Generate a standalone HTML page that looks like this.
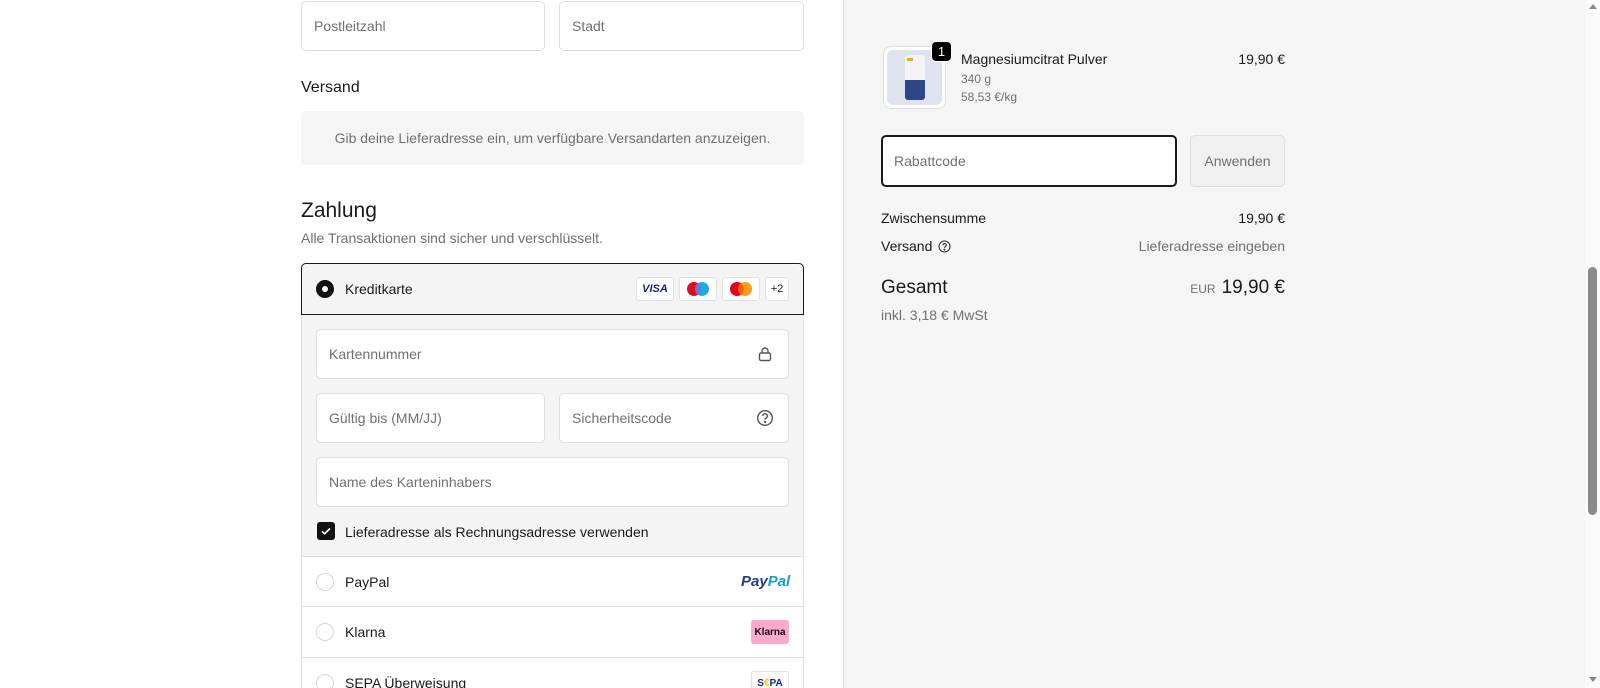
<!DOCTYPE html>
<html style="overflow:hidden;height:688px"><head><meta charset="utf-8"><style>
*{box-sizing:border-box;margin:0;padding:0}
body{width:1600px;height:688px;overflow:hidden;background:#fff;font-family:"Liberation Sans",sans-serif;color:#1a1a1a;position:relative;font-size:14px}
.abs{position:absolute}
.inp{position:absolute;border:1px solid #dedede;border-radius:5px;background:#fff;color:#707070;font-size:14px;padding-left:12px;display:flex;align-items:center}
.right{position:absolute;left:843px;top:0;width:742px;height:688px;background:#f5f5f5;border-left:1px solid #dedede}
.sb{position:absolute;left:1585px;top:0;width:15px;height:688px;background:#fafafa}
.card{position:absolute;height:24px;top:277px;background:#fff;border:1px solid #e1e1e1;border-radius:3px}
.radio{position:absolute;left:316px;width:18px;height:18px;border:1px solid #d6d6d6;border-radius:50%;background:#fff}
.hr{position:absolute;left:302px;width:501px;height:1px;background:#dedede}
.lbl{position:absolute;left:345px;font-size:14px}
</style></head><body>
<div class="inp" style="left:301px;top:1px;width:244px;height:50px">Postleitzahl</div>
<div class="inp" style="left:559px;top:1px;width:245px;height:50px">Stadt</div>
<div class="abs" style="left:301px;top:79px;font-size:16px">Versand</div>
<div class="abs" style="left:301px;top:111px;width:503px;height:54px;background:#f5f5f5;border-radius:5px;color:#707070;display:flex;align-items:center;justify-content:center">Gib deine Lieferadresse ein, um verfügbare Versandarten anzuzeigen.</div>
<div class="abs" style="left:301px;top:199px;font-size:21px">Zahlung</div>
<div class="abs" style="left:301px;top:230px;color:#707070">Alle Transaktionen sind sicher und verschlüsselt.</div>
<div class="abs" style="left:301px;top:263px;width:503px;height:425px;border:1px solid #dedede;border-bottom:0;border-radius:5px 5px 0 0"></div>
<div class="abs" style="left:302px;top:314px;width:501px;height:242px;background:#f4f4f4"></div>
<div class="abs" style="left:301px;top:263px;width:503px;height:52px;border:1px solid #1a1a1a;border-radius:5px 5px 0 0;background:#f4f4f4"></div>
<div class="abs" style="left:316px;top:280px;width:18px;height:18px;border-radius:50%;background:#111;border:1px solid #111"><div style="position:absolute;left:5px;top:5px;width:6px;height:6px;border-radius:50%;background:#fff"></div></div>
<div class="lbl" style="top:281px">Kreditkarte</div>
<div class="card" style="left:636px;width:38px;display:flex;align-items:center;justify-content:center;font:italic 900 11px 'Liberation Sans';color:#1a1f71">VISA</div>
<div class="card" style="left:679px;width:38px"><svg width="36" height="22"><circle cx="14" cy="11" r="7" fill="#e30d1f"/><circle cx="22" cy="11" r="7" fill="#00a2e5" opacity=".9"/><path d="M18 5.3a7 7 0 0 1 0 11.4a7 7 0 0 1 0-11.4z" fill="#7375cf"/></svg></div>
<div class="card" style="left:722px;width:38px"><svg width="36" height="22"><circle cx="14" cy="11" r="7" fill="#eb001b"/><circle cx="22" cy="11" r="7" fill="#f79e1b"/><path d="M18 5.3a7 7 0 0 1 0 11.4a7 7 0 0 1 0-11.4z" fill="#ff5f00"/></svg></div>
<div class="card" style="left:765px;width:24px;font-size:11px;display:flex;align-items:center;justify-content:center">+2</div>
<div class="inp" style="left:316px;top:329px;width:473px;height:50px">Kartennummer</div>
<svg class="abs" style="left:757px;top:346px" width="16" height="16" fill="none" stroke="#555" stroke-width="1.4"><rect x="2.5" y="7" width="11" height="7.5" rx="1.5"/><path d="M5 7V5a3 3 0 0 1 6 0v2"/></svg>
<div class="inp" style="left:316px;top:393px;width:229px;height:50px">Gültig bis (MM/JJ)</div>
<div class="inp" style="left:559px;top:393px;width:230px;height:50px">Sicherheitscode</div>
<svg class="abs" style="left:756px;top:409px" width="18" height="18" fill="none" stroke="#555" stroke-width="1.4"><circle cx="9" cy="9" r="7.3"/><path d="M6.8 7a2.3 2.3 0 1 1 3 2.2c-.6.3-.8.7-.8 1.4"/><circle cx="9" cy="13" r=".5" fill="#555"/></svg>
<div class="inp" style="left:316px;top:457px;width:473px;height:50px">Name des Karteninhabers</div>
<div class="abs" style="left:317px;top:522px;width:18px;height:18px;background:#111;border-radius:3px"><svg width="18" height="18"><path d="M5 9.3l2.6 2.5L13 6.5" stroke="#fff" stroke-width="1.6" fill="none"/></svg></div>
<div class="lbl" style="top:524px">Lieferadresse als Rechnungsadresse verwenden</div>
<div class="hr" style="top:556px"></div>
<div class="radio" style="top:573px"></div><div class="lbl" style="top:574px">PayPal</div>
<div class="abs" style="left:741px;top:573px;font:italic 900 15px 'Liberation Sans';color:#253b80">Pay<span style="color:#179bd7">Pal</span></div>
<div class="hr" style="top:606px"></div>
<div class="radio" style="top:623px"></div><div class="lbl" style="top:624px">Klarna</div>
<div class="abs" style="left:751px;top:620px;width:38px;height:24px;background:#ffa8cd;border-radius:3px;font:bold 10px 'Liberation Sans';color:#111;display:flex;align-items:center;justify-content:center">Klarna</div>
<div class="hr" style="top:657px"></div>
<div class="radio" style="top:674px"></div><div class="lbl" style="top:675px">SEPA Überweisung</div>
<div class="abs" style="left:751px;top:671px;width:38px;height:17px;background:#fff;border:1px solid #e1e1e1;border-bottom:0;border-radius:3px 3px 0 0;font:bold 10px 'Liberation Sans';color:#10298e;text-align:center;padding-top:6px;overflow:hidden">S<span style="color:#ffbe00">€</span>PA</div>
<div class="right"></div>
<div class="abs" style="left:883px;top:46px;width:63px;height:63px;border-radius:8px;background:#fff;border:1px solid #ddd;padding:3px"><div style="width:55px;height:55px;border-radius:6px;background:#dfe3ee;position:relative"><div style="position:absolute;left:18px;top:5px;width:20px;height:45px;background:#f4f4f6;border-radius:3px"></div><div style="position:absolute;left:18px;top:30px;width:20px;height:20px;background:#2d4688;border-radius:0 0 3px 3px"></div><div style="position:absolute;left:20px;top:8px;width:6px;height:3px;background:#e8b020"></div></div></div>
<div class="abs" style="left:931px;top:41px;width:21px;height:21px;background:#000;border-radius:5px;color:#fff;font-size:13px;text-align:center;line-height:19px;border:1px solid #fff">1</div>
<div class="abs" style="left:961px;top:51px;font-size:14px">Magnesiumcitrat Pulver</div>
<div class="abs" style="left:961px;top:72px;font-size:12px;color:#707070">340 g</div>
<div class="abs" style="left:961px;top:90px;font-size:12px;color:#707070">58,53 €/kg</div>
<div class="abs" style="right:315px;top:51px">19,90 €</div>
<div class="abs" style="left:881px;top:135px;width:296px;height:52px;border:2px solid #1a1a1a;border-radius:5px;background:#fff;color:#707070;padding-left:11px;display:flex;align-items:center">Rabattcode</div>
<div class="abs" style="left:1190px;top:135px;width:95px;height:52px;border:1px solid #dedede;border-radius:5px;background:#f0f0f0;color:#707070;display:flex;align-items:center;justify-content:center">Anwenden</div>
<div class="abs" style="left:881px;top:210px">Zwischensumme</div>
<div class="abs" style="right:315px;top:210px">19,90 €</div>
<div class="abs" style="left:881px;top:238px">Versand <svg width="13" height="13" style="vertical-align:-2px;margin-left:2px" fill="none" stroke="#333" stroke-width="1.1"><circle cx="6.5" cy="6.5" r="5.5"/><path d="M5 5.2a1.6 1.6 0 1 1 2.1 1.5c-.4.2-.6.5-.6 1"/><circle cx="6.5" cy="9.6" r=".4" fill="#333"/></svg></div>
<div class="abs" style="right:315px;top:238px;color:#707070">Lieferadresse eingeben</div>
<div class="abs" style="left:881px;top:277px;font-size:19px">Gesamt</div>
<div class="abs" style="right:315px;top:277px;font-size:19px"><span style="font-size:12px;color:#707070;margin-right:6px">EUR</span>19,90 €</div>
<div class="abs" style="left:881px;top:307px;color:#707070">inkl. 3,18 € MwSt</div>
<div class="sb"><div style="position:absolute;left:4px;top:4px;border:4px solid transparent;border-bottom:5px solid #888;border-top:0"></div><div style="position:absolute;left:3px;top:267px;width:9px;height:248px;border-radius:5px;background:#8a8a8a"></div><div style="position:absolute;left:4px;top:677px;border:4px solid transparent;border-top:5px solid #888;border-bottom:0"></div></div>
</body></html>
